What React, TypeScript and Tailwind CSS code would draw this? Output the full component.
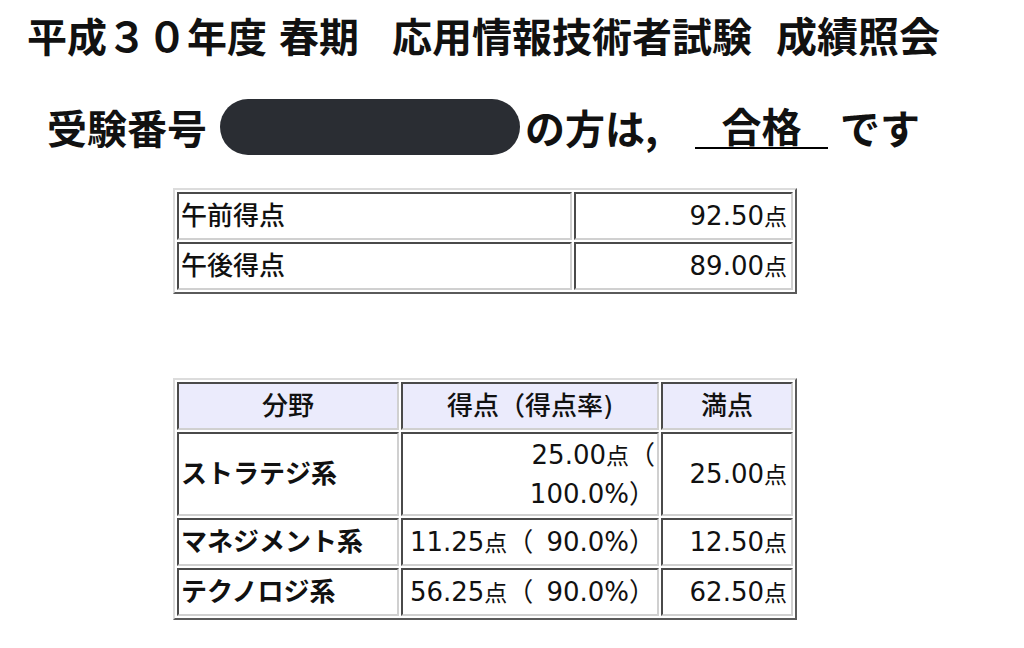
const font = { fontFamily: '"Noto Sans CJK JP", "Noto Sans", sans-serif' };
const cellFont = { fontFamily: '"DejaVu Sans", "Noto Sans CJK JP", sans-serif' };

const cell =
  'border-2 border-solid border-t-[#4a4a4a] border-l-[#4a4a4a] border-b-[#d0d0d0] border-r-[#d0d0d0] align-middle';

const ScoreRow = ({ label, value }: { label: string; value: string }) => (
  <tr className="h-[48px]">
    <td className={`${cell} w-[395px] pl-[2px] font-medium`}>{label}</td>
    <td className={`${cell} w-[219px] pr-[4px] text-right`}>
      {value}
      <span className="text-[23px]">点</span>
    </td>
  </tr>
);

const fields = [
  { name: 'ストラテジ系', score: '25.00', rate: '100.0%', max: '25.00', wrap: true },
  { name: 'マネジメント系', score: '11.25', rate: '90.0%', max: '12.50', wrap: false },
  { name: 'テクノロジ系', score: '56.25', rate: '90.0%', max: '62.50', wrap: false },
];

export default function App() {
  return (
    <div className="min-h-[648px] w-[1024px] bg-white text-[#111]" style={font}>
      {/* 見出し */}
      <h1 className="pl-[27px] pt-[10px] text-[40px] font-bold leading-[48px] whitespace-nowrap">
        <span>平成３０年度</span>
        <span className="ml-[12px]">春期</span>
        <span className="ml-[33px]">応用情報技術者試験</span>
        <span className="ml-[24px] text-[41px]">成績照会</span>
      </h1>

      {/* 受験番号 */}
      <div className="mt-[40px] flex h-[56px] items-center pl-[47px] text-[40px] font-bold leading-none whitespace-nowrap">
        <span>受験番号</span>
        <span className="ml-[13px] h-[56px] w-[300px] rounded-full bg-[#2a2d33]" />
        <span className="ml-[5px]">の方は,</span>
        <span className="ml-[37px] inline-block w-[133px] border-b-2 border-black pb-[2px] text-center">
          合格
        </span>
        <span className="ml-[12px]">です</span>
      </div>

      {/* 午前・午後 */}
      <table
        className="ml-[173px] mt-[33px] w-[624px] table-fixed border-separate border-spacing-[2px] border-2 border-solid border-t-[#dcdcdc] border-l-[#dcdcdc] border-b-[#5a5a5a] border-r-[#5a5a5a] text-[26px] leading-[38px]"
        style={cellFont}
      >
        <tbody>
          <ScoreRow label="午前得点" value="92.50" />
          <ScoreRow label="午後得点" value="89.00" />
        </tbody>
      </table>

      {/* 分野別 */}
      <table
        className="ml-[173px] mt-[84px] w-[624px] table-fixed border-separate border-spacing-[2px] border-2 border-solid border-t-[#dcdcdc] border-l-[#dcdcdc] border-b-[#5a5a5a] border-r-[#5a5a5a] text-[26px] leading-[38px]"
        style={cellFont}
      >
        <thead>
          <tr className="h-[48px] bg-[#ebebfc]">
            <th className={`${cell} w-[222px] text-center font-medium`}>分野</th>
            <th className={`${cell} w-[258px] text-center font-medium`}>得点（得点率)</th>
            <th className={`${cell} w-[132px] text-center font-medium`}>満点</th>
          </tr>
        </thead>
        <tbody>
          {fields.map((f) => (
            <tr key={f.name} className={f.wrap ? 'h-[84px]' : 'h-[48px]'}>
              <td className={`${cell} pl-[2px] font-bold`}>{f.name}</td>
              <td className={`${cell} pr-[2px] text-right whitespace-nowrap`}>
                {f.score}
                <span className="text-[23px]">点</span>（{f.wrap ? <br /> : '\u2002'}
                {f.rate}）
              </td>
              <td className={`${cell} pr-[4px] text-right`}>
                {f.max}
                <span className="text-[23px]">点</span>
              </td>
            </tr>
          ))}
        </tbody>
      </table>
    </div>
  );
}
